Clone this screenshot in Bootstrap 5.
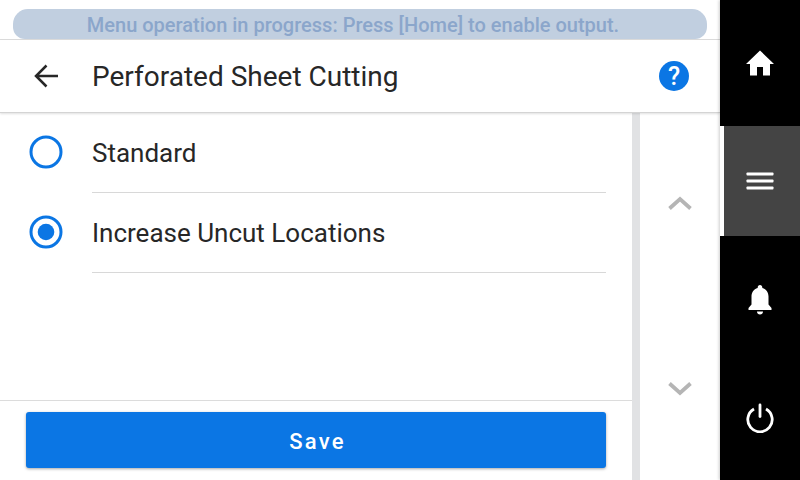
<!DOCTYPE html>
<html lang="en"><head><meta charset="utf-8"><title>Perforated Sheet Cutting</title>
<link href="https://cdn.jsdelivr.net/npm/bootstrap@5.3.0/dist/css/bootstrap.min.css" rel="stylesheet">
<style>
html,body{width:800px;height:480px;overflow:hidden;margin:0;background:#fff;font-family:Roboto,"Liberation Sans",sans-serif;color:#272727}
.shell{width:800px;height:480px}
.mainpane{width:720px}
.rail{width:80px;background:#000;box-shadow:-1px 0 3px rgba(0,0,0,.2);position:relative;z-index:2}
.status-wrap{height:40px;padding:9px 13px 0;border-bottom:1px solid #dcdcdc}
.status-pill{height:30px;border-radius:15px 15px 12px 12px;background:#c1cfe0;color:#8ba6cb;font-size:20px;font-weight:500;line-height:32px;text-align:center;padding-right:14px}
.headbar{height:73px;padding:0 31px 0 34px;border-bottom:1px solid #d4d4d4;box-shadow:0 1px 2px rgba(0,0,0,.12);position:relative;z-index:1}
.headbar h1{font-size:28px;font-weight:400;margin:0 0 0 34px;line-height:77px;color:#272727}
.bodyrow{height:367px}
.listcol{width:632px}
.optlist{height:287px}
.optrow{height:80px;padding-left:29px}
.optrow .radio-ic{width:34px;height:34px;flex:none;margin-bottom:3px}
.optlabel{margin-left:29px;width:514px;height:80px;line-height:81px;border-bottom:1px solid #d8d8d8;font-size:26px}
.savebar{height:80px;border-top:1px solid #dcdcdc;padding:11px 0 0 26px}
.savebtn{width:580px;height:56px;background:#0b76e4;border:0;border-radius:3px;color:#fff;font-size:22px;font-weight:500;letter-spacing:2.2px;box-shadow:0 1px 3px rgba(0,0,0,.35);padding:2px 0 0 3px}
.savebtn:hover{background:#0b76e4;color:#fff}
.scrolltrack{width:8px;background:#e1e2e4}
.pagercol{width:80px}
.pagebtn-up{height:180px}
.pagebtn-down{height:187px;padding-top:5px}
.railbtn{width:80px}
.railbtn.first{height:126px}
.railbtn.cur{height:110px;background:#444;border-left:4px solid #fff;padding-right:4px}
.railbtn.tall{height:122px;padding-top:5px}
.railbtn.last{height:122px;padding-bottom:3px}
</style></head>
<body>
<div class="shell d-flex">
 <div class="mainpane d-flex flex-column">
  <div class="status-wrap"><div class="status-pill">Menu operation in progress: Press [Home] to enable output.</div></div>
  <div class="headbar d-flex align-items-center">
   <svg width="24" height="24" viewBox="0 0 24 24" fill="none" stroke="#272727" stroke-width="2.500"><path d="M24 12H2.500M12.500 1.500 2 12l10.500 10.500"/></svg>
   <h1 class="flex-grow-1">Perforated Sheet Cutting</h1>
   <svg width="30" height="30" viewBox="0 0 30 30"><circle cx="15" cy="15" r="15" fill="#0b76e4"/><text x="15" y="23.500" text-anchor="middle" font-family="Roboto" font-weight="500" font-size="25" fill="#fff">?</text></svg>
  </div>
  <div class="bodyrow d-flex">
   <div class="listcol d-flex flex-column">
    <div class="optlist">
     <div class="optrow d-flex align-items-center">
      <svg class="radio-ic" viewBox="0 0 34 34"><circle cx="17" cy="17" r="15" fill="none" stroke="#0b76e4" stroke-width="3"/></svg>
      <div class="optlabel">Standard</div>
     </div>
     <div class="optrow d-flex align-items-center">
      <svg class="radio-ic" viewBox="0 0 34 34"><circle cx="17" cy="17" r="15" fill="none" stroke="#0b76e4" stroke-width="3"/><circle cx="17" cy="17" r="8.300" fill="#0b76e4"/></svg>
      <div class="optlabel">Increase Uncut Locations</div>
     </div>
    </div>
    <div class="savebar"><button type="button" class="btn savebtn">Save</button></div>
   </div>
   <div class="scrolltrack"></div>
   <div class="pagercol d-flex flex-column">
    <div class="pagebtn-up d-flex align-items-center justify-content-center">
     <svg width="24" height="14" viewBox="0 0 24 14" fill="none" stroke="#b5b5b5" stroke-width="3.800"><path d="M1.500 12.500 12 3l10.500 9.500"/></svg>
    </div>
    <div class="pagebtn-down d-flex align-items-center justify-content-center">
     <svg width="24" height="14" viewBox="0 0 24 14" fill="none" stroke="#b5b5b5" stroke-width="3.800"><path d="M1.500 1.500 12 11l10.500-9.500"/></svg>
    </div>
   </div>
  </div>
 </div>
 <div class="rail d-flex flex-column">
  <div class="railbtn first d-flex align-items-center justify-content-center">
   <svg width="28" height="26" viewBox="0 0 28 26" fill="#fff"><path d="M14 .5 0 14h4v11.500h7V17h6v8.500h7V14h4z"/></svg>
  </div>
  <div class="railbtn cur d-flex align-items-center justify-content-center">
   <svg width="28" height="20" viewBox="0 0 28 20" fill="#fff"><rect x=".5" width="27" height="3" y="1.500" rx=".8"/><rect x=".5" width="27" height="3" y="8.500" rx=".8"/><rect x=".5" width="27" height="3" y="15.500" rx=".8"/></svg>
  </div>
  <div class="railbtn tall d-flex align-items-center justify-content-center">
   <svg width="24" height="30" viewBox="0 0 24 30" fill="#fff"><path d="M12 0c-1.400 0-2.300 1-2.300 2.300v.6C5.500 4 3.500 7.500 3.500 11.500v8L.5 23v2h23v-2l-3-3.500v-8c0-4-2-7.500-6.200-8.600v-.6C14.300 1 13.400 0 12 0z"/><path d="M9 26.500h6c0 1.800-1.300 3-3 3s-3-1.200-3-3z"/></svg>
  </div>
  <div class="railbtn last d-flex align-items-center justify-content-center">
   <svg width="30" height="30" viewBox="0 0 30 30" fill="none" stroke="#fff" stroke-width="2.800" stroke-linecap="round"><path d="M15 2v11.500"/><path d="M9 6A12.200 12.200 0 1 0 21 6" stroke-linecap="butt"/></svg>
  </div>
 </div>
</div>
<script src="https://cdn.jsdelivr.net/npm/bootstrap@5.3.0/dist/js/bootstrap.bundle.min.js"></script>
</body></html>
